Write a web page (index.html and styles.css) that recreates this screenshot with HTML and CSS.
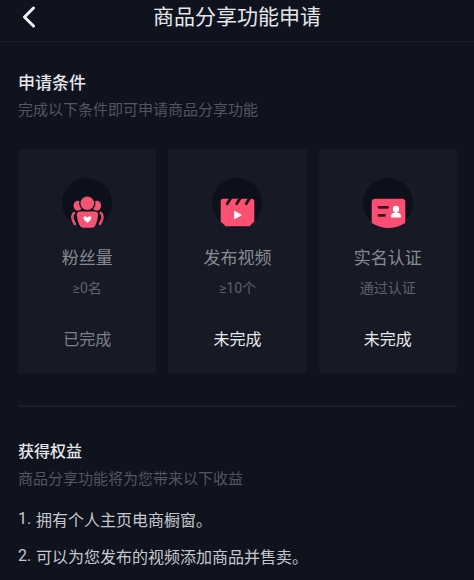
FILE: index.html
```html
<!DOCTYPE html>
<html lang="zh-CN">
<head>
    <meta charset="UTF-8">
    <meta name="viewport" content="width=device-width, initial-scale=1.0">
    <title>商品分享功能申请</title>
    <link rel="stylesheet" href="styles.css">
</head>
<body>
    <header class="top-bar">
        <button type="button" class="back-btn" aria-label="返回">
            <svg width="14" height="22" viewBox="0 0 14 22">
                <path d="M11.5 2 L2.5 11 L11.5 20" fill="none" stroke="currentColor" stroke-width="3" stroke-linecap="round" stroke-linejoin="round"/>
            </svg>
        </button>
        <h1>商品分享功能申请</h1>
    </header>

    <main class="content">
        <section class="conditions">
            <h2>申请条件</h2>
            <p class="hint">完成以下条件即可申请商品分享功能</p>

            <div class="cards">
                <div class="card">
                    <svg class="card-icon" viewBox="0 0 50 50">
                        <circle cx="25" cy="25" r="25" fill="#0c101b"/>
                        <g fill="#f45473">
                            <ellipse cx="15.8" cy="27.8" rx="4.3" ry="5"/>
                            <ellipse cx="34.8" cy="27.8" rx="4.3" ry="5"/>
                            <circle cx="25.3" cy="25.2" r="8.2" fill="#0c101b"/>
                            <circle cx="25.3" cy="25.2" r="6.8"/>
                            <path d="M18 33.5 H33 Q36.3 33.5 36 37 Q35.5 44 33 48 Q32 49.8 30 49.8 H21 Q19 49.8 18 48 Q15.3 44 14.8 37 Q14.6 33.5 18 33.5 Z"/>
                        </g>
                        <path d="M12 35 Q8 38.5 13 46 M38.8 35 Q42.8 38.5 37.8 46" fill="none" stroke="#e65070" stroke-width="2.6" stroke-linecap="round"/>
                        <path d="M25.4 45 L22 41.7 Q20.6 39.6 22.2 38.5 Q24.2 37.6 25.4 39.8 Q26.6 37.6 28.6 38.5 Q30.2 39.6 28.8 41.7 Z" fill="#fff"/>
                    </svg>
                    <h3>粉丝量</h3>
                    <p class="target">≥0名</p>
                    <p class="status done">已完成</p>
                </div>

                <div class="card">
                    <svg class="card-icon" viewBox="0 0 50 50">
                        <circle cx="25" cy="25" r="25" fill="#0c101b"/>
                        <path d="M11.5 20.7 H39.5 Q42.3 20.7 42.3 23.5 V43.5 L37.5 48.3 H13.5 L8.7 43.5 V23.5 Q8.7 20.7 11.5 20.7 Z" fill="#fd5073"/>
                        <path d="M18.5 20.5 L15.2 25.8 M28 20.5 L24.7 25.8 M37.5 20.5 L34.2 25.8" stroke="#1d0f1b" stroke-width="2.8" stroke-linecap="round"/>
                        <path d="M22.7 33.4 L29.2 37 L22.7 40.7 Z" fill="#fff" stroke="#fff" stroke-linejoin="round"/>
                    </svg>
                    <h3>发布视频</h3>
                    <p class="target">≥10个</p>
                    <p class="status">未完成</p>
                </div>

                <div class="card">
                    <svg class="card-icon" viewBox="0 0 50 50">
                        <circle cx="25" cy="25" r="25" fill="#0c101b"/>
                        <path d="M12.5 20.7 H39 Q42.3 20.7 42.3 24 V45 Q34 50 25.5 50 Q17 50 8.7 45 V24 Q8.7 20.7 12.5 20.7 Z" fill="#fc4e72"/>
                        <path d="M16 29.3 H24.5 M16 37.4 H21.5" stroke="#3a1023" stroke-width="2.8" stroke-linecap="round"/>
                        <circle cx="33" cy="31" r="3.2" fill="#fff"/>
                        <path d="M31.6 32 H34.4 V35 H36 Q38 35.4 38 39.6 H28 Q28 35.4 30 35 H31.6 Z" fill="#fff"/>
                    </svg>
                    <h3>实名认证</h3>
                    <p class="target">通过认证</p>
                    <p class="status">未完成</p>
                </div>
            </div>
        </section>

        <section class="benefits">
            <h2>获得权益</h2>
            <p class="hint">商品分享功能将为您带来以下收益</p>
            <ol>
                <li>拥有个人主页电商橱窗。</li>
                <li>可以为您发布的视频添加商品并售卖。</li>
            </ol>
        </section>
    </main>
</body>
</html>
```
FILE: styles.css
```css
* {
    box-sizing: border-box;
}
body {
    margin: 0;
    background-color: #0f131e;
    color: #e6e7ea;
    font-family: Roboto, "Noto Sans CJK SC", sans-serif;
}
h1, h2, h3, p, ol {
    margin: 0;
    font-weight: normal;
}
.top-bar {
    display: grid;
    grid-template-columns: 22px 1fr 22px;
    align-items: center;
    height: 42px;
    padding: 0 18px 8px;
    border-bottom: 1px solid #191d28;
}
.back-btn {
    display: flex;
    justify-content: center;
    padding: 0;
    border: none;
    background: none;
    color: #f4f4f6;
    cursor: pointer;
}
h1 {
    font-size: 21px;
    line-height: 32px;
    text-align: center;
}
.content {
    padding: 27px 17px 0 18px;
}
h2 {
    font-size: 17px;
    font-weight: 500;
    line-height: 28px;
}
.hint {
    margin-top: 1px;
    color: #535660;
    font-size: 15px;
    line-height: 24px;
}
.cards {
    display: grid;
    grid-template-columns: repeat(3, 1fr);
    gap: 12px;
    margin-top: 27px;
}
.card {
    display: flex;
    flex-direction: column;
    align-items: center;
    padding: 29px 0 20px;
    border-radius: 3px;
    background-color: #171a25;
}
.card-icon {
    width: 50px;
    height: 50px;
}
h3 {
    margin-top: 16px;
    color: #888a92;
    font-size: 17px;
    line-height: 28px;
}
.target {
    margin-top: 4px;
    color: #5e616a;
    font-size: 14px;
    line-height: 24px;
}
.status {
    margin-top: 26px;
    color: #e6e7ea;
    font-size: 16px;
    line-height: 28px;
}
.status.done {
    color: #7d8088;
}
.benefits {
    margin-top: 31px;
    padding-top: 31px;
    border-top: 2px solid #1b1f2a;
}
.benefits h2 {
    font-size: 16px;
}
ol {
    margin-top: 16px;
    padding-left: 0;
    color: #c6c8ce;
    list-style: none;
    counter-reset: benefit;
}
li {
    display: flex;
    padding-bottom: 9px;
    font-size: 16px;
    line-height: 28px;
    counter-increment: benefit;
}
/* number sits slightly above the text line */
li::before {
    content: counter(benefit) ".";
    width: 18px;
    line-height: 24px;
}
```
